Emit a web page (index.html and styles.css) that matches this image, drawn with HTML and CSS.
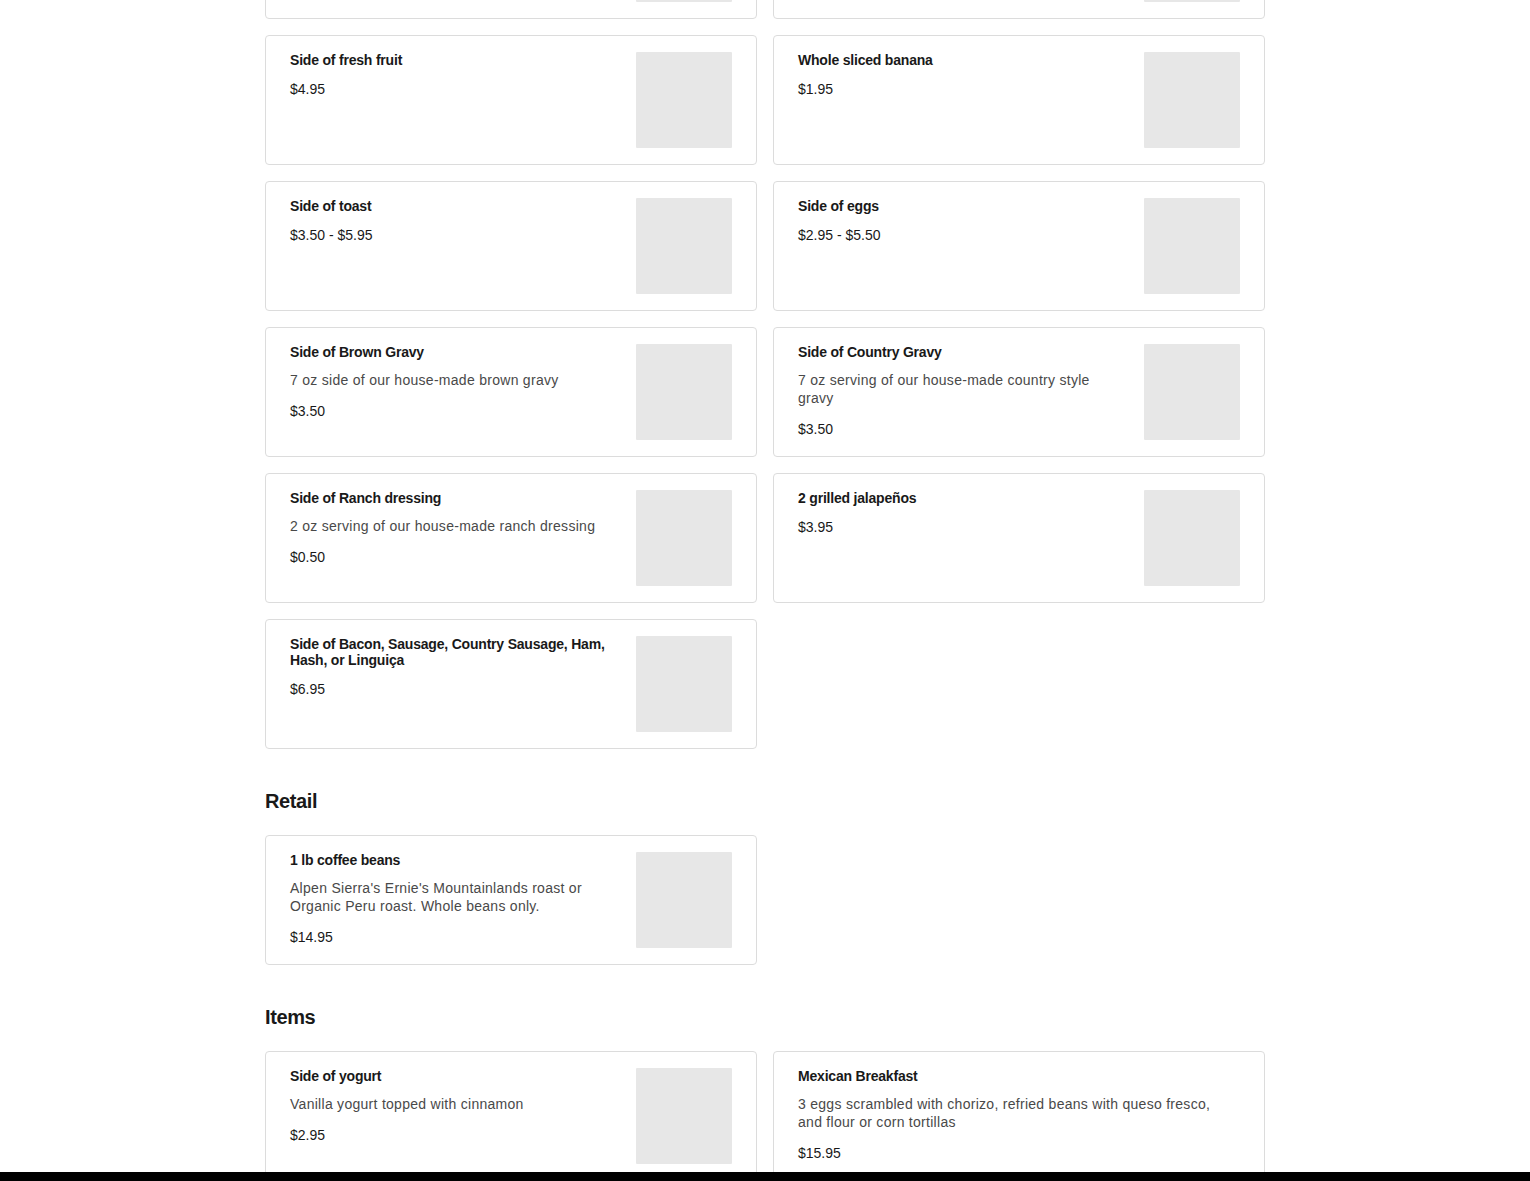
FILE: index.html
```html
<!DOCTYPE html>
<html lang="en">
<head>
<meta charset="utf-8">
<title>Menu</title>
<link rel="stylesheet" href="styles.css">
</head>
<body>
<main class="menu">
  <section class="section">
    <div class="grid">
      <div class="card">
        <div class="info"></div>
        <div class="thumb"></div>
      </div>
      <div class="card">
        <div class="info"></div>
        <div class="thumb"></div>
      </div>
      <div class="card">
        <div class="info">
          <div class="title">Side of fresh fruit</div>
          <div class="price">$4.95</div>
        </div>
        <div class="thumb"></div>
      </div>
      <div class="card">
        <div class="info">
          <div class="title">Whole sliced banana</div>
          <div class="price">$1.95</div>
        </div>
        <div class="thumb"></div>
      </div>
      <div class="card">
        <div class="info">
          <div class="title">Side of toast</div>
          <div class="price">$3.50 - $5.95</div>
        </div>
        <div class="thumb"></div>
      </div>
      <div class="card">
        <div class="info">
          <div class="title">Side of eggs</div>
          <div class="price">$2.95 - $5.50</div>
        </div>
        <div class="thumb"></div>
      </div>
      <div class="card">
        <div class="info">
          <div class="title">Side of Brown Gravy</div>
          <div class="desc">7 oz side of our house-made brown gravy</div>
          <div class="price">$3.50</div>
        </div>
        <div class="thumb"></div>
      </div>
      <div class="card">
        <div class="info">
          <div class="title">Side of Country Gravy</div>
          <div class="desc">7 oz serving of our house-made country style gravy</div>
          <div class="price">$3.50</div>
        </div>
        <div class="thumb"></div>
      </div>
      <div class="card">
        <div class="info">
          <div class="title">Side of Ranch dressing</div>
          <div class="desc">2 oz serving of our house-made ranch dressing</div>
          <div class="price">$0.50</div>
        </div>
        <div class="thumb"></div>
      </div>
      <div class="card">
        <div class="info">
          <div class="title">2 grilled jalapeños</div>
          <div class="price">$3.95</div>
        </div>
        <div class="thumb"></div>
      </div>
      <div class="card">
        <div class="info">
          <div class="title">Side of Bacon, Sausage, Country Sausage, Ham, Hash, or Linguiça</div>
          <div class="price">$6.95</div>
        </div>
        <div class="thumb"></div>
      </div>
    </div>
  </section>

  <section class="section">
    <h2 class="heading">Retail</h2>
    <div class="grid">
      <div class="card">
        <div class="info">
          <div class="title">1 lb coffee beans</div>
          <div class="desc">Alpen Sierra's Ernie's Mountainlands roast or Organic Peru roast. Whole beans only.</div>
          <div class="price">$14.95</div>
        </div>
        <div class="thumb"></div>
      </div>
    </div>
  </section>

  <section class="section">
    <h2 class="heading">Items</h2>
    <div class="grid">
      <div class="card">
        <div class="info">
          <div class="title">Side of yogurt</div>
          <div class="desc">Vanilla yogurt topped with cinnamon</div>
          <div class="price">$2.95</div>
        </div>
        <div class="thumb"></div>
      </div>
      <div class="card">
        <div class="info info-wide">
          <div class="title">Mexican Breakfast</div>
          <div class="desc">3 eggs scrambled with chorizo, refried beans with queso fresco, and flour or corn tortillas</div>
          <div class="price">$15.95</div>
        </div>
      </div>
    </div>
  </section>
</main>
<div class="bottom-bar"></div>
</body>
</html>
```
FILE: styles.css
```css
* {
  box-sizing: border-box;
}

html, body {
  margin: 0;
  padding: 0;
  background: #ffffff;
}

body {
  font-family: "Liberation Sans", Arial, sans-serif;
  color: #191919;
}

.menu {
  width: 1000px;
  margin: -111px auto 0;
  padding-bottom: 40px;
}

.section + .section {
  margin-top: 40px;
}

.heading {
  margin: 0 0 22px;
  font-size: 20px;
  line-height: 24px;
  font-weight: 700;
  letter-spacing: -0.4px;
  color: #191919;
}

.grid {
  display: grid;
  grid-template-columns: 1fr 1fr;
  gap: 16px;
}

.card {
  display: flex;
  align-items: flex-start;
  gap: 24px;
  min-height: 130px;
  padding: 16px 24px;
  border: 1px solid #dcdcdc;
  border-radius: 4px;
  background: #ffffff;
}

.info {
  flex: 1;
  min-width: 0;
}

.info-wide {
  flex: 0 1 430px;
}

.title {
  font-size: 14px;
  line-height: 16px;
  font-weight: 700;
  letter-spacing: -0.2px;
  color: #191919;
  margin-bottom: 11px;
}

.desc {
  font-size: 14px;
  line-height: 18px;
  letter-spacing: 0.28px;
  color: #494949;
  margin-bottom: 12px;
}

.price {
  font-size: 14px;
  line-height: 18px;
  padding-top: 1px;
  margin-bottom: -1px;
  color: #191919;
}

.thumb {
  flex: 0 0 96px;
  width: 96px;
  height: 96px;
  background: #e7e7e7;
  border-radius: 1px;
}

.bottom-bar {
  position: fixed;
  left: 0;
  right: 0;
  bottom: 0;
  height: 9px;
  background: #000000;
}
```
